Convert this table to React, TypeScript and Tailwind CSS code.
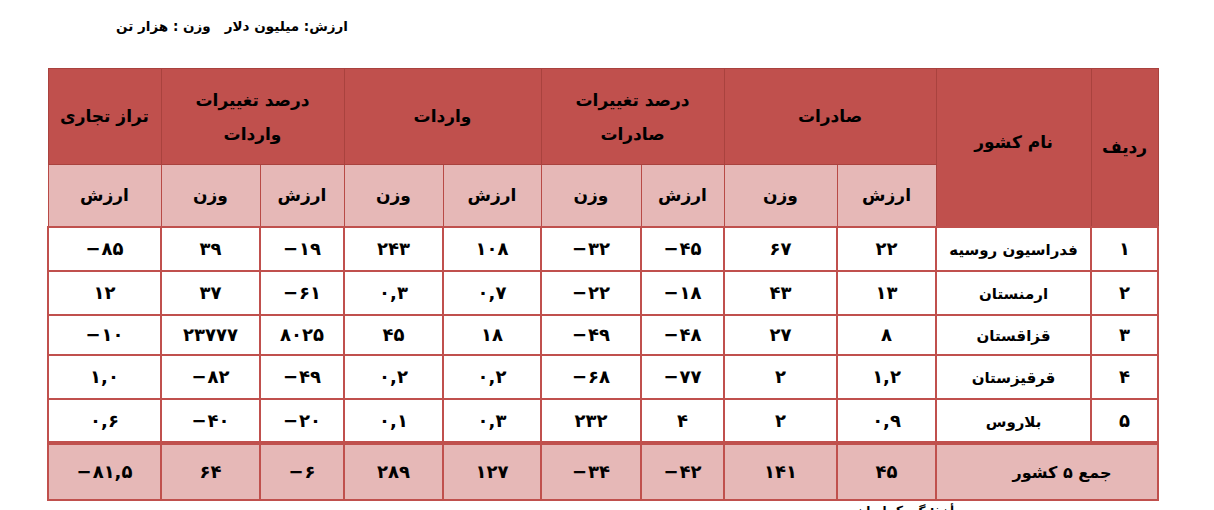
import React from "react";

const FONT = { fontFamily: '"DejaVu Sans", "Noto Sans", sans-serif' };

type Row = string[];

const rows: Row[] = [
  ["۱", "فدراسیون روسیه", "۲۲", "۶۷", "−۴۵", "−۳۲", "۱۰۸", "۲۴۳", "−۱۹", "۳۹", "−۸۵"],
  ["۲", "ارمنستان", "۱۳", "۴۳", "−۱۸", "−۲۲", "۰,۷", "۰,۳", "−۶۱", "۳۷", "۱۲"],
  ["۳", "قزاقستان", "۸", "۲۷", "−۴۸", "−۴۹", "۱۸", "۴۵", "۸۰۲۵", "۲۳۷۷۷", "−۱۰"],
  ["۴", "قرقیزستان", "۱,۲", "۲", "−۷۷", "−۶۸", "۰,۲", "۰,۲", "−۴۹", "−۸۲", "۱,۰"],
  ["۵", "بلاروس", "۰,۹", "۲", "۴", "۲۳۲", "۰,۳", "۰,۱", "−۲۰", "−۴۰", "۰,۶"],
];

const total = ["۴۵", "۱۴۱", "−۴۲", "−۳۴", "۱۲۷", "۲۸۹", "−۶", "۶۴", "−۸۱,۵"];

const widths = [67, 155, 99, 113, 83, 100, 98, 99, 84, 99, 113];
const rowHeights = ["h-[44px]", "h-[44px]", "h-[40px]", "h-[44px]", "h-[44px]"];

function Num({ v }: { v: string }) {
  const neg = v.startsWith("−");
  const body = neg ? v.slice(1) : v;
  return (
    <span dir="ltr" className="inline-flex flex-row items-center justify-center">
      {neg && <span className="mr-[1px]">−</span>}
      <span dir="ltr">{body}</span>
    </span>
  );
}

export default function App() {
  return (
    <div className="w-[1214px] h-[510px] bg-white overflow-hidden text-black" style={FONT}>
      <div className="h-[68px] pt-[14px]">
        <div dir="rtl" className="w-[348px] text-[13.5px] font-bold leading-[24px]">
          ارزش: میلیون دلار&nbsp;&nbsp; وزن : هزار تن
        </div>
      </div>
      <div className="pl-[47px]">
        <table dir="rtl" className="w-[1110px] table-fixed border-collapse">
          <colgroup>
            {widths.map((w, i) => (
              <col key={i} style={{ width: w }} />
            ))}
          </colgroup>
          <thead>
            <tr className="h-[96px] bg-[#c0504d] text-[17px] font-bold">
              <th rowSpan={2} className="border border-[#a9423e] align-middle font-bold">
                ردیف
              </th>
              <th rowSpan={2} className="border border-[#a9423e] align-middle font-bold pb-[10px]">
                نام کشور
              </th>
              <th colSpan={2} className="border border-[#a9423e] font-bold">
                صادرات
              </th>
              <th colSpan={2} className="border border-[#a9423e] font-bold leading-[34px]">
                درصد تغییرات
                <br />
                صادرات
              </th>
              <th colSpan={2} className="border border-[#a9423e] font-bold">
                واردات
              </th>
              <th colSpan={2} className="border border-[#a9423e] font-bold leading-[34px]">
                درصد تغییرات
                <br />
                واردات
              </th>
              <th className="border border-[#a9423e] font-bold">تراز تجاری</th>
            </tr>
            <tr className="h-[62px] text-[17px] font-bold">
              {["ارزش", "وزن", "ارزش", "وزن", "ارزش", "وزن", "ارزش", "وزن", "ارزش"].map((t, i) => (
                <th key={i} className="border border-[#b84a46] bg-[#e6b8b7] font-bold">
                  {t}
                </th>
              ))}
            </tr>
          </thead>
          <tbody>
            {rows.map((r, ri) => (
              <tr key={ri} className={`${rowHeights[ri]} bg-white text-[18px] font-bold`}>
                {r.map((c, ci) => (
                  <td
                    key={ci}
                    className="border-x-2 border-y-2 border-[#c0504d] text-center align-middle"
                  >
                    {ci === 1 ? <span className="text-[15px]">{c}</span> : <Num v={c} />}
                  </td>
                ))}
              </tr>
            ))}
            <tr className="h-[57px] bg-[#e6b8b7] text-[18px] font-bold">
              <td colSpan={2} className="border-x-2 border-b-2 border-t-[4px] border-[#c0504d] text-center">
                <span className="text-[16px] pl-[30px]">جمع ۵ کشور</span>
              </td>
              {total.map((c, i) => (
                <td key={i} className="border-x-2 border-b-2 border-t-[4px] border-[#c0504d] text-center">
                  <Num v={c} />
                </td>
              ))}
            </tr>
          </tbody>
        </table>
      </div>
      <div className="pt-[2px]">
        <div dir="rtl" className="w-[962px] text-[12px] font-bold leading-[16px]">
          مأخذ: گمرک ایران
        </div>
      </div>
    </div>
  );
}
